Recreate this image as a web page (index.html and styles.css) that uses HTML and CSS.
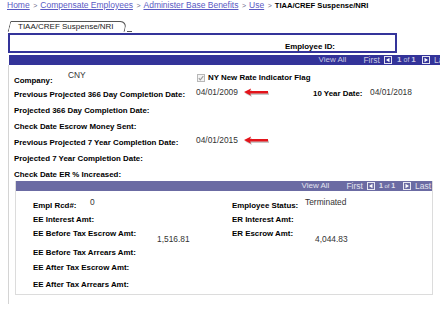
FILE: index.html
```html
<!DOCTYPE html>
<html>
<head>
<meta charset="utf-8">
<title>TIAA/CREF Suspense/NRI</title>
<link rel="stylesheet" href="styles.css">
</head>
<body>
<div class="page">
  <div class="crumbs">
    <a class="crumb">Home</a><span class="sep">&gt;</span><a class="crumb">Compensate Employees</a><span class="sep">&gt;</span><a class="crumb">Administer Base Benefits</a><span class="sep">&gt;</span><a class="crumb">Use</a><span class="sep">&gt;</span><span class="current">TIAA/CREF Suspense/NRI</span>
  </div>

  <div class="tabs"><div class="tab">TIAA/CREF Suspense/NRI</div></div>

  <div class="hdr"><span class="emp-id">Employee ID:</span></div>

  <div class="navbar navbar-main">
    <span class="nav-viewall">View All</span>
    <span class="nav-first">First</span>
    <svg class="nav-icon" width="8" height="8" viewBox="0 0 8 8"><rect x="0.5" y="0.5" width="7" height="7" fill="none" stroke="#e4e4f0"/><polygon points="2,4 5.5,1.8 5.5,6.2" fill="#ffffff"/></svg>
    <span class="nav-count"><b>1</b> of <b>1</b></span>
    <svg class="nav-icon" width="8" height="8" viewBox="0 0 8 8"><rect x="0.5" y="0.5" width="7" height="7" fill="none" stroke="#e4e4f0"/><polygon points="6,4 2.5,1.8 2.5,6.2" fill="#ffffff"/></svg>
    <span class="nav-last">Last</span>
  </div>

  <div class="main">
    <div class="row row-first">
      <div class="c1">
        <span class="lbl company-lbl">Company:</span>
        <span class="val val-high">CNY</span>
      </div>
      <div class="flag">
        <svg class="chk" width="8" height="8" viewBox="0 0 8 8"><rect x="0.5" y="0.5" width="7" height="7" fill="#f4f4f4" stroke="#b8b8b8"/><path d="M1.8 4.2 L3.3 5.8 L6.3 2.2" fill="none" stroke="#9a9a9a" stroke-width="1.1"/></svg>
        <span class="lbl">NY New Rate Indicator Flag</span>
      </div>
    </div>

    <div class="row row-second">
      <div class="c1"><span class="lbl">Previous Projected 366 Day Completion Date:</span></div>
      <div class="c2">
        <span class="val">04/01/2009</span>
        <svg class="arrow" width="27" height="11" viewBox="0 0 27 11"><path d="M2 6.5 L9 3 L8.2 5.5 L26 5.5 L26 8 L8.2 8 L9 10 Z" fill="#c8c8c8"/><path d="M1 5 L8 1.5 L7.2 4 L25 4 L25 6.5 L7.2 6.5 L8 8.8 Z" fill="#e3141b"/></svg>
      </div>
      <div class="c3"><span class="lbl">10 Year Date:</span></div>
      <div class="c4"><span class="val">04/01/2018</span></div>
    </div>

    <div class="row"><div class="c1"><span class="lbl">Projected 366 Day Completion Date:</span></div></div>
    <div class="row"><div class="c1"><span class="lbl">Check Date Escrow Money Sent:</span></div></div>

    <div class="row">
      <div class="c1"><span class="lbl">Previous Projected 7 Year Completion Date:</span></div>
      <div class="c2">
        <span class="val">04/01/2015</span>
        <svg class="arrow" width="27" height="11" viewBox="0 0 27 11"><path d="M2 6.5 L9 3 L8.2 5.5 L26 5.5 L26 8 L8.2 8 L9 10 Z" fill="#c8c8c8"/><path d="M1 5 L8 1.5 L7.2 4 L25 4 L25 6.5 L7.2 6.5 L8 8.8 Z" fill="#e3141b"/></svg>
      </div>
    </div>

    <div class="row"><div class="c1"><span class="lbl">Projected 7 Year Completion Date:</span></div></div>
    <div class="row"><div class="c1"><span class="lbl">Check Date ER % Increased:</span></div></div>

    <div class="inner">
      <div class="navbar navbar-sub">
        <span class="nav-viewall">View All</span>
        <span class="nav-first">First</span>
        <svg class="nav-icon" width="8" height="8" viewBox="0 0 8 8"><rect x="0.5" y="0.5" width="7" height="7" fill="none" stroke="#e8e8f2"/><polygon points="2,4 5.5,1.8 5.5,6.2" fill="#ffffff"/></svg>
        <span class="nav-count"><b>1</b> of <b>1</b></span>
        <svg class="nav-icon" width="8" height="8" viewBox="0 0 8 8"><rect x="0.5" y="0.5" width="7" height="7" fill="none" stroke="#e8e8f2"/><polygon points="6,4 2.5,1.8 2.5,6.2" fill="#ffffff"/></svg>
        <span class="nav-last">Last</span>
      </div>

      <div class="irow irow-first">
        <div class="ic1"><span class="lbl rcd-lbl">Empl Rcd#:</span><span class="val val-up">0</span></div>
        <div class="ic2"></div>
        <div class="ic3"><span class="lbl">Employee Status:</span></div>
        <div class="ic4"><span class="val val-up">Terminated</span></div>
      </div>
      <div class="irow">
        <div class="ic1"><span class="lbl">EE Interest Amt:</span></div>
        <div class="ic2"></div>
        <div class="ic3"><span class="lbl">ER Interest Amt:</span></div>
      </div>
      <div class="irow irow-split">
        <div class="ic1 top"><span class="lbl">EE Before Tax Escrow Amt:</span></div>
        <div class="ic2"><span class="val">1,516.81</span></div>
        <div class="ic3 top"><span class="lbl">ER Escrow Amt:</span></div>
        <div class="ic4 amt"><span class="val">4,044.83</span></div>
      </div>
      <div class="irow">
        <div class="ic1"><span class="lbl">EE Before Tax Arrears Amt:</span></div>
      </div>
      <div class="irow irow-15">
        <div class="ic1"><span class="lbl">EE After Tax Escrow Amt:</span></div>
      </div>
      <div class="irow irow-17">
        <div class="ic1"><span class="lbl">EE After Tax Arrears Amt:</span></div>
      </div>
    </div>
  </div>
</div>
</body>
</html>
```

FILE: styles.css
```css
html, body {
  margin: 0;
  padding: 0;
  background: #ffffff;
  overflow: hidden;
}
body {
  width: 440px;
  height: 309px;
  font-family: "Liberation Sans", Arial, sans-serif;
  color: #000;
}
.page {
  width: 460px;
}

/* breadcrumbs */
.crumbs {
  height: 14px;
  line-height: 11px;
  padding-left: 7px;
  font-size: 8.5px;
  white-space: nowrap;
  display: flex;
  align-items: flex-start;
}
.crumb {
  color: #5a5ac4;
  text-decoration: underline;
  flex: none;
}
.sep {
  color: #6a6a8a;
  margin: 0 3px 0 3.5px;
  font-size: 7px;
  flex: none;
}
.current {
  font-weight: bold;
  font-size: 7.6px;
  flex: none;
}

/* tab */
.tabs {
  margin-top: 7px;
  padding-left: 9px;
  height: 11px;
  display: flex;
}
.tab {
  position: relative;
  font-size: 8px;
  line-height: 11px;
  padding: 0 14px 0 9px;
  color: #222;
}
.tab::before {
  content: "";
  position: absolute;
  left: 0;
  top: 0;
  right: 2px;
  bottom: 0;
  border: 1px solid #555;
  border-bottom: none;
  border-top-right-radius: 7px;
  border-top-left-radius: 1px;
  transform: skewX(-14deg);
}
.tab::after {
  content: "";
  position: absolute;
  right: -4px;
  bottom: 0;
  width: 5px;
  border-bottom: 1px solid #555;
}

/* header */
.hdr {
  margin: 1px 0 0 8px;
  width: 385px;
  height: 16px;
  border: 2px solid #34349a;
  box-sizing: content-box;
}
.emp-id {
  display: block;
  font-size: 7.9px;
  font-weight: bold;
  line-height: 9px;
  padding-top: 7px;
  padding-left: 275px;
}

/* navigation bars */
.navbar {
  display: flex;
  align-items: center;
  justify-content: flex-end;
  height: 10px;
  font-size: 8px;
  line-height: 10px;
  white-space: nowrap;
}
.navbar-main {
  margin: 2px 0 0 9px;
  width: 441px;
  background: #333399;
  color: #c8c8e0;
  padding-right: 1px;
}
.navbar-sub {
  background: #6b6ba3;
  color: #e2e2ee;
  padding-right: 1px;
}
.nav-viewall {
  margin-right: 17px;
  flex: none;
}
.nav-first {
  font-size: 8.5px;
  margin-right: 4px;
  flex: none;
}
.nav-last {
  font-size: 8.5px;
  flex: none;
}
.nav-icon {
  display: block;
  margin-right: 4px;
  flex: none;
}
.nav-count {
  display: block;
  text-align: center;
  font-size: 6px;
  flex: none;
}
.nav-count b {
  font-size: 7px;
}
.navbar-main .nav-count {
  width: 21px;
  margin-right: 5px;
  font-size: 7px;
}
.navbar-main .nav-count b {
  font-size: 8px;
}
.navbar-sub .nav-count {
  width: 16px;
  margin-right: 8px;
}

/* main area */
.main {
  margin-left: 8px;
  border-left: 1px solid #d4d4d4;
  padding: 2px 0 9px 5px;
}
.row {
  display: flex;
  align-items: flex-end;
  height: 16px;
}
.row-first {
  height: 19px;
}
.row-second {
  height: 14px;
}
.lbl {
  font-size: 7.9px;
  font-weight: bold;
  line-height: 10px;
  white-space: nowrap;
}
.val {
  font-size: 8.4px;
  line-height: 10px;
  color: #333;
  white-space: nowrap;
  padding-bottom: 3px;
}
.val-high {
  padding-bottom: 6px;
}
.c1 {
  width: 182px;
  display: flex;
  align-items: flex-end;
  flex: none;
}
.company-lbl {
  width: 54px;
  display: inline-block;
}
.c2 {
  width: 117px;
  display: flex;
  align-items: flex-end;
  flex: none;
}
.c3 {
  width: 57px;
  flex: none;
}
.c4 {
  display: flex;
  align-items: flex-end;
}
.flag {
  display: flex;
  align-items: center;
  padding-bottom: 3px;
  gap: 3px;
  margin-left: 1px;
}
.chk {
  display: block;
}
.arrow {
  display: block;
  margin: 0 0 2px 5px;
}

/* inner box */
.inner {
  margin: 1px 7px 0 1px;
  width: 416px;
  border: 1px solid #dcdcdc;
  border-top: none;
  padding-bottom: 4px;
}
.irow {
  display: flex;
  align-items: flex-end;
  height: 14px;
  padding-left: 17px;
}
.irow-first {
  height: 20px;
}
.irow-split {
  height: 19px;
  align-items: stretch;
}
.irow-15 {
  height: 15px;
}
.irow-17 {
  height: 17px;
}
.ic1 {
  width: 124px;
  flex: none;
  display: flex;
  align-items: flex-end;
}
.ic2 {
  width: 75px;
  flex: none;
  display: flex;
  align-items: flex-end;
}
.ic3 {
  width: 73px;
  flex: none;
  display: flex;
  align-items: flex-end;
}
.ic4 {
  display: flex;
  align-items: flex-end;
}
.irow-split .top {
  align-items: flex-start;
  padding-top: 4px;
}
.irow-split .val {
  padding-bottom: 0;
}
.amt {
  padding-left: 10px;
}
.rcd-lbl {
  width: 57px;
  display: inline-block;
}
.val-up {
  padding-bottom: 4px;
}
```
